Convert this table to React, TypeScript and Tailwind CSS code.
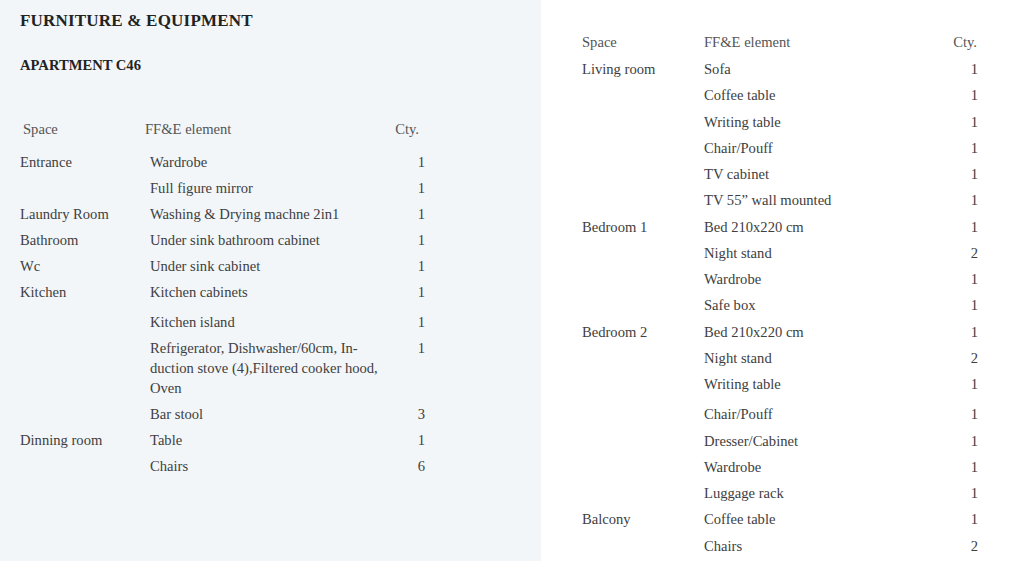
import React from 'react';

type Row = { space?: string; item: React.ReactNode; qty: string; gap?: boolean };

const leftRows: Row[] = [
  { space: 'Entrance', item: 'Wardrobe', qty: '1' },
  { item: 'Full figure mirror', qty: '1' },
  { space: 'Laundry Room', item: 'Washing & Drying machne 2in1', qty: '1' },
  { space: 'Bathroom', item: 'Under sink bathroom cabinet', qty: '1' },
  { space: 'Wc', item: 'Under sink cabinet', qty: '1' },
  { space: 'Kitchen', item: 'Kitchen cabinets', qty: '1' },
  { item: 'Kitchen island', qty: '1', gap: true },
  {
    item: (
      <>
        Refrigerator, Dishwasher/60cm, In-
        <br />
        duction stove (4),Filtered cooker hood,
        <br />
        Oven
      </>
    ),
    qty: '1',
  },
  { item: 'Bar stool', qty: '3' },
  { space: 'Dinning room', item: 'Table', qty: '1' },
  { item: 'Chairs', qty: '6' },
];

const rightRows: Row[] = [
  { space: 'Living room', item: 'Sofa', qty: '1' },
  { item: 'Coffee table', qty: '1' },
  { item: 'Writing table', qty: '1' },
  { item: 'Chair/Pouff', qty: '1' },
  { item: 'TV cabinet', qty: '1' },
  { item: 'TV 55” wall mounted', qty: '1' },
  { space: 'Bedroom 1', item: 'Bed 210x220 cm', qty: '1' },
  { item: 'Night stand', qty: '2' },
  { item: 'Wardrobe', qty: '1' },
  { item: 'Safe box', qty: '1' },
  { space: 'Bedroom 2', item: 'Bed 210x220 cm', qty: '1' },
  { item: 'Night stand', qty: '2' },
  { item: 'Writing table', qty: '1' },
  { item: 'Chair/Pouff', qty: '1', gap: true },
  { item: 'Dresser/Cabinet', qty: '1' },
  { item: 'Wardrobe', qty: '1' },
  { item: 'Luggage rack', qty: '1' },
  { space: 'Balcony', item: 'Coffee table', qty: '1' },
  { item: 'Chairs', qty: '2' },
];

const Header: React.FC<{ cols: string }> = ({ cols }) => (
  <div className={`grid ${cols} h-[26px] items-center text-[#555]`}>
    <span>Space</span>
    <span>FF&amp;E element</span>
    <span className="text-right">Cty.</span>
  </div>
);

const Rows: React.FC<{ rows: Row[]; cols: string; rowH: string }> = ({ rows, cols, rowH }) => (
  <div className="flex flex-col">
    {rows.map((r, i) => (
      <div
        key={i}
        className={`grid ${cols} py-[3px] leading-[20px] ${rowH} ${r.gap ? 'mt-[4px]' : ''}`}
      >
        <span>{r.space ?? ''}</span>
        <span className="pr-4 whitespace-nowrap">{r.item}</span>
        <span className="text-right">{r.qty}</span>
      </div>
    ))}
  </div>
);

export default function App() {
  return (
    <div
      className="flex w-[1024px] h-[561px] overflow-hidden bg-white text-[14.6px] text-[#404040]"
      style={{ fontFamily: '"Liberation Serif", "Times New Roman", serif' }}
    >
      <section className="w-[541px] shrink-0 bg-[#f2f6f9] pl-[20px]">
        <h1 className="mt-[11px] text-[17px] leading-[20px] font-bold tracking-[0.2px] text-[#222]">
          FURNITURE &amp; EQUIPMENT
        </h1>
        <h2 className="mt-[25px] text-[14.6px] leading-[18px] font-bold text-[#222]">APARTMENT C46</h2>
        <div className="mt-[43px] w-[405px]">
          <div className="pl-[3px] pr-[6px]">
            <Header cols="grid-cols-[122px_1fr_auto]" />
          </div>
          <div className="mt-[6px]">
            <Rows rows={leftRows} cols="grid-cols-[130px_1fr_auto]" rowH="" />
          </div>
        </div>
      </section>

      <section className="flex-1 pl-[41px] pt-[30px]">
        <div className="w-[396px]">
          <div className="pr-[1px]">
            <Header cols="grid-cols-[122px_1fr_auto]" />
          </div>
          <Rows rows={rightRows} cols="grid-cols-[122px_1fr_auto]" rowH="min-h-[26.25px]" />
        </div>
      </section>
    </div>
  );
}
